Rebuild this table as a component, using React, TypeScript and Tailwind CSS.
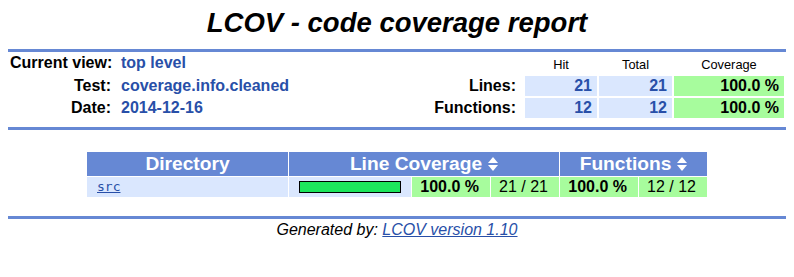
import React from "react";

const SUMMARY = [
  { label: "Current view:", value: "top level" },
  { label: "Test:", value: "coverage.info.cleaned" },
  { label: "Date:", value: "2014-12-16" },
];

const TOTALS = [
  { name: "Lines:", hit: 21, total: 21, pct: "100.0 %" },
  { name: "Functions:", hit: 12, total: 12, pct: "100.0 %" },
];

function Ruler() {
  return <div className="h-[3px] bg-[#6688d4]" />;
}

function SortIcon() {
  return (
    <svg width="10" height="14" viewBox="0 0 10 14" className="inline-block align-[-1px] ml-[6px]">
      <polygon points="5,0 10,6 0,6" fill="#ffffff" />
      <polygon points="0,8 10,8 5,14" fill="#ffffff" />
    </svg>
  );
}

function HeaderSummary() {
  return (
    <div className="grid grid-cols-[108px_261px_140px_72px_73px_110px] auto-rows-[20px] gap-[2px] px-[2px] pt-[2px] pb-[9px] whitespace-nowrap">
      {/* row 1 */}
      <div className="text-right font-bold pr-[7px] leading-[18px]">{SUMMARY[0].label}</div>
      <div className="pl-[1px] font-bold text-[#284fa8] leading-[18px]">{SUMMARY[0].value}</div>
      <div />
      <div className="flex items-center justify-center text-[12.8px] pt-[1px]">Hit</div>
      <div className="flex items-center justify-center text-[12.8px] pt-[1px]">Total</div>
      <div className="flex items-center justify-center text-[12.8px] pt-[1px]">Coverage</div>

      {TOTALS.map((t, i) => (
        <React.Fragment key={t.name}>
          <div className="text-right font-bold pr-[7px] leading-[19px]">{SUMMARY[i + 1].label}</div>
          <div className="pl-[1px] font-bold text-[#284fa8] leading-[19px]">{SUMMARY[i + 1].value}</div>
          <div className="text-right font-bold pr-[7px] leading-[19px]">{t.name}</div>
          <div className="bg-[#dae7fe] text-right font-bold text-[#284fa8] pr-[5px] leading-[20px]">{t.hit}</div>
          <div className="bg-[#dae7fe] text-right font-bold text-[#284fa8] pr-[5px] leading-[20px]">{t.total}</div>
          <div className="bg-[#a7fc9d] text-right font-bold pr-[5px] leading-[20px]">{t.pct}</div>
        </React.Fragment>
      ))}
    </div>
  );
}

function DirectoryTable() {
  return (
    <div className="pt-[22px] pb-[19px]">
      <div className="mx-auto w-[620px]">
        <div className="grid grid-cols-[201px_270px_147px] gap-x-px h-[24px] bg-white text-white font-bold text-[19.2px] leading-[24px]">
          <div className="bg-[#6688d4] text-center">Directory</div>
          <div className="bg-[#6688d4] text-center">
            Line Coverage
            <SortIcon />
          </div>
          <div className="bg-[#6688d4] text-center">
            Functions
            <SortIcon />
          </div>
        </div>
        <div className="mt-px grid grid-cols-[201px_122px_78px_68px_78px_68px] gap-x-px h-[20px] leading-[20px]">
          <div className="bg-[#dae7fe] pl-[10px] font-['DejaVu_Sans_Mono',monospace] text-[13px]">
            <a href="#" className="text-[#284fa8] underline">
              src
            </a>
          </div>
          <div className="bg-[#dae7fe] pl-[10px] flex items-center">
            <div className="w-[102px] h-[12px] border border-black bg-[#1ce65c]" />
          </div>
          <div className="bg-[#a7fc9d] text-right pr-[11px] font-bold">100.0 %</div>
          <div className="bg-[#a7fc9d] text-right pr-[11px]">21 / 21</div>
          <div className="bg-[#a7fc9d] text-right pr-[11px] font-bold">100.0 %</div>
          <div className="bg-[#a7fc9d] text-right pr-[11px]">12 / 12</div>
        </div>
      </div>
    </div>
  );
}

export default function App() {
  return (
    <div className="min-h-[277px] bg-white px-2 pt-2 font-['Liberation_Sans',Arial,sans-serif] text-[16px] text-black">
      <h1 className="h-[41px] text-center text-[27.5px] font-bold italic leading-[30.6px]">
        LCOV - code coverage report
      </h1>
      <Ruler />
      <HeaderSummary />
      <Ruler />
      <DirectoryTable />
      <Ruler />
      <div className="pt-[2px] text-center italic leading-[18px]">
        Generated by:{" "}
        <a href="#" className="text-[#284fa8] underline">
          LCOV version 1.10
        </a>
      </div>
    </div>
  );
}
